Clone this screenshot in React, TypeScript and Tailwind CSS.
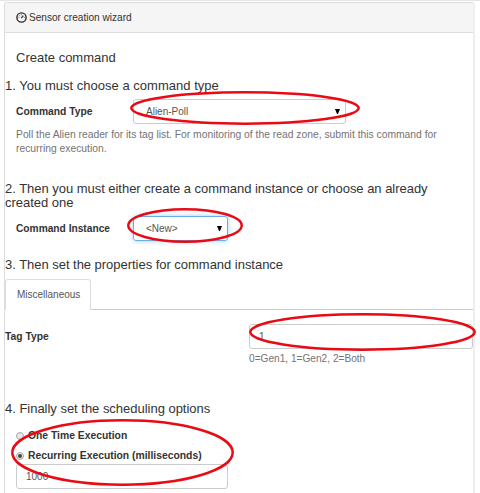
import type { ReactNode } from 'react';
import clsx from 'clsx';

interface HeadingProps {
  children: ReactNode;
  className?: string;
}

const Heading = ({ children, className }: HeadingProps) => (
  <h4 className={clsx('text-[13px] leading-[14px] text-[#333] whitespace-nowrap', className)}>{children}</h4>
);

interface MarkerProps {
  width: number;
  height: number;
  className: string;
}

// Red ring drawn over the fields the user has to fill in
const Marker = ({ width, height, className }: MarkerProps) => (
  <svg width={width} height={height} className={clsx('absolute pointer-events-none', className)}>
    <ellipse
      cx={width / 2}
      cy={height / 2}
      rx={width / 2 - 1.3}
      ry={height / 2 - 1.3}
      fill="none"
      stroke="#e90a14"
      strokeWidth="2.5"
    />
  </svg>
);

const Arrow = () => (
  <svg width="5" height="5" viewBox="0 0 5 5" className="shrink-0">
    <path d="M0 0h5L3 5H2Z" fill="#000" />
  </svg>
);

const Radio = ({ checked }: { checked?: boolean }) => (
  <span className="flex size-2 shrink-0 items-center justify-center rounded-full border border-[#aaa] bg-[#e8e8e8]">
    {checked && <span className="size-1 rounded-full bg-[#444]" />}
  </span>
);

const GaugeIcon = () => (
  <svg width="11" height="11" viewBox="0 0 11 11" fill="none" stroke="#2b2b2b">
    <circle cx="5.5" cy="5.5" r="4.6" strokeWidth="1.4" />
    <path d="M5.3 6.2L7.3 3.6" strokeWidth="1.1" />
    <path d="M2.4 5.2h1M3.4 3.2l.6.6M5.4 2.3v.9M7.8 5.4h.9" strokeWidth=".7" />
  </svg>
);

export default function App() {
  return (
    <div className="h-[493px] w-[480px] overflow-hidden border-t border-[#e5e5e5] bg-white pt-px pl-1 font-['Liberation_Sans',Arial,sans-serif] text-[10px] leading-[14px] text-[#333]">
      <div className="h-[500px] w-[471px] rounded-t-[3px] border-t border-l border-[#ddd] border-r-2 border-r-[#eee]">
        <div className="flex h-[30px] items-center gap-[2px] rounded-t-[2px] border-b border-[#ddd] bg-[#f5f5f5] pl-[11px]">
          <GaugeIcon />
          <span className="pt-px text-[10.1px]">Sensor creation wizard</span>
        </div>

        <Heading className="mt-[18px] ml-[11px]">Create command</Heading>
        <Heading className="mt-[14px] tracking-[0.02px]">1. You must choose a command type</Heading>

        <div className="relative mt-[6px] flex h-[25px] items-center pl-[11px]">
          <label className="w-[117px] pt-px text-[10.3px] font-bold">Command Type</label>
          <div className="flex h-[25px] w-[213px] items-center justify-between rounded-[3px] border border-[#ccc] pr-[5px] pl-3 text-[#555]">
            <span className="pt-px">Alien-Poll</span>
            <Arrow />
          </div>
          <Marker width={230} height={34} className="top-[-8px] left-[125px]" />
        </div>
        <p className="mt-1 ml-[11px] text-[10.32px] whitespace-nowrap text-[#737373]">
          Poll the Alien reader for its tag list. For monitoring of the read zone, submit this command for
          <br />
          recurring execution.
        </p>

        <Heading className="mt-[26px] tracking-[-0.03px]">
          2. Then you must either create a command instance or choose an already
          <br />
          created one
        </Heading>
        <div className="relative mt-[6px] flex h-[25px] items-center pl-[11px]">
          <label className="w-[117px] pt-px text-[10.2px] font-bold">Command Instance</label>
          <div className="flex h-[25px] w-[95px] items-center justify-between rounded-[3px] border border-[#66afe9] pr-[5px] pl-3 text-[#555] shadow-[0_0_5px_rgba(102,175,233,0.6)]">
            <span>&lt;New&gt;</span>
            <Arrow />
          </div>
          <Marker width={116} height={35} className="top-[-8px] left-[122px]" />
        </div>

        <Heading className="mt-[17px] tracking-[-0.03px]">3. Then set the properties for command instance</Heading>
        <div className="mt-[7px] flex h-[31px]">
          <div className="flex w-[86px] items-center rounded-t-[3px] border border-b-0 border-[#ddd] pl-[11px] text-[#555]">
            Miscellaneous
          </div>
          <div className="flex-1 border-b border-[#ccc]" />
        </div>

        <div className="relative mt-[14px] flex h-[25px] items-center">
          <label className="w-[244px] pt-px text-[10.3px] font-bold">Tag Type</label>
          <div className="ml-px flex h-[25px] w-[224px] shrink-0 items-center rounded-[3px] border border-[#ccc] pl-[9px] text-[#555]">
            1
          </div>
          <Marker width={227} height={38} className="top-[-11px] left-[244px]" />
        </div>
        <p className="mt-[3px] ml-[244px] text-[10.15px] text-[#737373]">0=Gen1, 1=Gen2, 2=Both</p>

        <Heading className="mt-[36px] tracking-[-0.02px]">4. Finally set the scheduling options</Heading>
        <div className="relative mt-[13px] pl-[11px] text-[10.35px] font-bold">
          <label className="flex h-[14px] items-center gap-1">
            <Radio />
            One Time Execution
          </label>
          <label className="mt-[6px] flex h-[14px] items-center gap-1">
            <Radio checked />
            Recurring Execution (milliseconds)
          </label>
          <div className="mt-px flex h-[25px] w-[212px] items-center rounded-[3px] border border-[#ccc] pl-[9px] text-[10px] font-normal text-[#555]">
            1000
          </div>
          <Marker width={223} height={67} className="top-[-10px] left-[6px]" />
        </div>
      </div>
    </div>
  );
}
